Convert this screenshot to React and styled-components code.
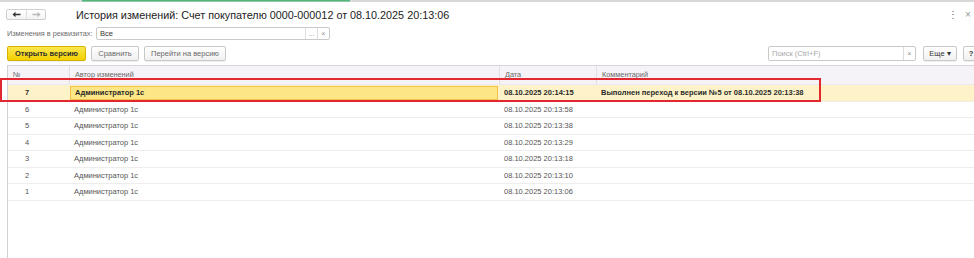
import React from "react";
import styled, { createGlobalStyle } from "styled-components";

const Global = createGlobalStyle`
  html, body { margin: 0; padding: 0; background: #fff; }
  body { width: 974px; height: 258px; overflow: hidden; font-family: "Liberation Sans", Arial, sans-serif; }
  * { box-sizing: border-box; }
`;

const Page = styled.div`
  position: relative;
  width: 974px;
  height: 258px;
  overflow: hidden;
  background: #fff;
`;

const TopStrip = styled.div`
  height: 3px;
  background:
    linear-gradient(90deg, transparent 0 82px, #4fb678 82px 350px, transparent 350px) top / 100% 1.5px no-repeat,
    linear-gradient(180deg, #d8d8d8 0 2px, transparent 2px);
`;

const TitleBar = styled.div`
  display: flex;
  align-items: center;
  height: 23px;
  padding-left: 6px;
  padding-right: 2px;
`;

const NavGroup = styled.div`
  display: flex;
  height: 11px;
  border: 1px solid #cfcfcf;
  border-radius: 2px;
  background: linear-gradient(#ffffff, #f3f3f3);
`;

const NavBtn = styled.div`
  width: 19px;
  display: flex;
  align-items: center;
  justify-content: center;
  color: ${(p) => (p.$disabled ? "#b8b8b8" : "#333")};
  & + & { border-left: 1px solid #dedede; }
`;

const Title = styled.div`
  margin-left: 30px;
  font-size: 10.8px;
  color: #222;
  white-space: nowrap;
  flex: 1;
`;

const TitleIcon = styled.div`
  font-size: 10px;
  color: ${(p) => p.$color || "#777"};
  margin-left: ${(p) => p.$ml || 0}px;
  width: 8px;
  text-align: center;
`;

const FilterRow = styled.div`
  display: flex;
  align-items: center;
  height: 13px;
  margin-top: 1px;
  padding-left: 7px;
`;

const SmallLabel = styled.span`
  font-size: 7.3px;
  color: #6e6e6e;
  width: 89px;
  white-space: nowrap;
`;

const InputBox = styled.div`
  display: flex;
  width: ${(p) => p.$w}px;
  height: ${(p) => p.$h || 13}px;
  border: 1px solid #c9c9c9;
  border-radius: 2px;
  background: #fff;
`;

const InputText = styled.div`
  flex: 1;
  font-size: 7.5px;
  color: ${(p) => (p.$placeholder ? "#a8a8a8" : "#333")};
  padding-left: 3px;
  display: flex;
  align-items: center;
  white-space: nowrap;
`;

const InputBtn = styled.div`
  width: 12px;
  border-left: 1px solid #dcdcdc;
  display: flex;
  align-items: center;
  justify-content: center;
  font-size: 6.5px;
  color: #8a8a8a;
`;

const Toolbar = styled.div`
  display: flex;
  align-items: center;
  width: 979px;
  height: 15px;
  margin-top: 6px;
  padding-left: 7px;
`;

const Button = styled.div`
  height: 15px;
  width: ${(p) => p.$w}px;
  margin-left: ${(p) => p.$ml || 0}px;
  display: flex;
  align-items: center;
  justify-content: center;
  font-size: 7.5px;
  white-space: nowrap;
  border-radius: 2px;
  border: 1px solid ${(p) => (p.$primary ? "#d6b300" : "#c8c8c8")};
  background: ${(p) =>
    p.$primary ? "linear-gradient(#fbe74f, #f3d100)" : "linear-gradient(#ffffff, #f1f1f1)"};
  color: ${(p) => (p.$primary ? "#2d2d2d" : p.$dark ? "#333" : "#6a6a6a")};
  font-weight: ${(p) => (p.$bold ? 700 : 400)};
  box-shadow: 0 1px 0 rgba(0, 0, 0, 0.06);
`;

const Spacer = styled.div`
  flex: 1;
`;

const Table = styled.div`
  position: relative;
  margin-top: 4px;
  margin-left: 7px;
  height: 200px;
  border-left: 1px solid #d2d2d2;
  border-top: 1px solid #d8d3dc;
`;

const cols = "61px 430px 97px 1fr";

const HeaderRow = styled.div`
  display: grid;
  grid-template-columns: ${cols};
  height: 19px;
  background: #f5f2f8;
  border-bottom: 1px solid #ece8ef;
`;

const HeadCell = styled.div`
  display: flex;
  align-items: center;
  padding-left: ${(p) => p.$pl || 5}px;
  padding-bottom: 1px;
  font-size: 7.3px;
  color: #6a6a6a;
  border-left: ${(p) => (p.$first ? "none" : "1px solid #e2dde6")};
`;

const Row = styled.div`
  display: grid;
  grid-template-columns: ${cols};
  height: 16.5px;
  border-bottom: 1px solid #ededed;
  background: ${(p) => (p.$selected ? "#fef3c8" : "#fff")};
  font-weight: ${(p) => (p.$selected ? 700 : 400)};
  color: ${(p) => (p.$selected ? "#2a2a2a" : "#555")};
`;

const Cell = styled.div`
  display: flex;
  align-items: center;
  padding-left: ${(p) => p.$pl || 5}px;
  font-size: 7.5px;
  white-space: nowrap;
  overflow: hidden;
`;

const CurrentCell = styled(Cell)`
  margin: 1px;
  padding-left: 4px;
  background: #fde685;
  border: 1px solid #f3c24a;
`;

const Highlight = styled.div`
  position: absolute;
  left: 0;
  top: 78px;
  width: 821px;
  height: 24px;
  border: 2px solid #e3272f;
  pointer-events: none;
`;

const Arrow = ({ dir }) => (
  <svg width="9" height="7" viewBox="0 0 9 7">
    {dir === "left" ? (
      <path d="M0.5 3.5 L3.5 0.8 V2.7 H8.5 V4.3 H3.5 V6.2 Z" fill="currentColor" />
    ) : (
      <path d="M8.5 3.5 L5.5 0.8 V2.7 H0.5 V4.3 H5.5 V6.2 Z" fill="currentColor" />
    )}
  </svg>
);

const rows = [
  { n: 7, date: "08.10.2025 20:14:15", comment: "Выполнен переход к версии №5 от 08.10.2025 20:13:38", selected: true },
  { n: 6, date: "08.10.2025 20:13:58" },
  { n: 5, date: "08.10.2025 20:13:38" },
  { n: 4, date: "08.10.2025 20:13:29" },
  { n: 3, date: "08.10.2025 20:13:18" },
  { n: 2, date: "08.10.2025 20:13:10" },
  { n: 1, date: "08.10.2025 20:13:06" },
];

export default function App() {
  return (
    <Page>
      <Global />
      <TopStrip />
      <TitleBar>
        <NavGroup>
          <NavBtn><Arrow dir="left" /></NavBtn>
          <NavBtn $disabled><Arrow dir="right" /></NavBtn>
        </NavGroup>
        <Title>История изменений: Счет покупателю 0000-000012 от 08.10.2025 20:13:06</Title>
        <TitleIcon $color="#666">⋮</TitleIcon>
        <TitleIcon $ml={8} $color="#999">×</TitleIcon>
      </TitleBar>
      <FilterRow>
        <SmallLabel>Изменения в реквизитах:</SmallLabel>
        <InputBox $w={234}>
          <InputText>Все</InputText>
          <InputBtn>...</InputBtn>
          <InputBtn>×</InputBtn>
        </InputBox>
      </FilterRow>
      <Toolbar>
        <Button $primary $bold $w={79}>Открыть версию</Button>
        <Button $ml={5} $w={48}>Сравнить</Button>
        <Button $ml={5} $w={82}>Перейти на версию</Button>
        <Spacer />
        <InputBox $w={148} $h={15}>
          <InputText $placeholder>Поиск (Ctrl+F)</InputText>
          <InputBtn>×</InputBtn>
        </InputBox>
        <Button $ml={7} $w={34} $dark>Еще ▾</Button>
        <Button $ml={6} $w={16} $dark $bold>?</Button>
      </Toolbar>
      <Table>
        <HeaderRow>
          <HeadCell $first $pl={5}>№</HeadCell>
          <HeadCell>Автор изменений</HeadCell>
          <HeadCell>Дата</HeadCell>
          <HeadCell>Комментарий</HeadCell>
        </HeaderRow>
        {rows.map((r) => (
          <Row key={r.n} $selected={r.selected}>
            <Cell $pl={17}>{r.n}</Cell>
            {r.selected ? <CurrentCell>Администратор 1с</CurrentCell> : <Cell>Администратор 1с</Cell>}
            <Cell>{r.date}</Cell>
            <Cell>{r.comment || ""}</Cell>
          </Row>
        ))}
      </Table>
      <Highlight />
    </Page>
  );
}
